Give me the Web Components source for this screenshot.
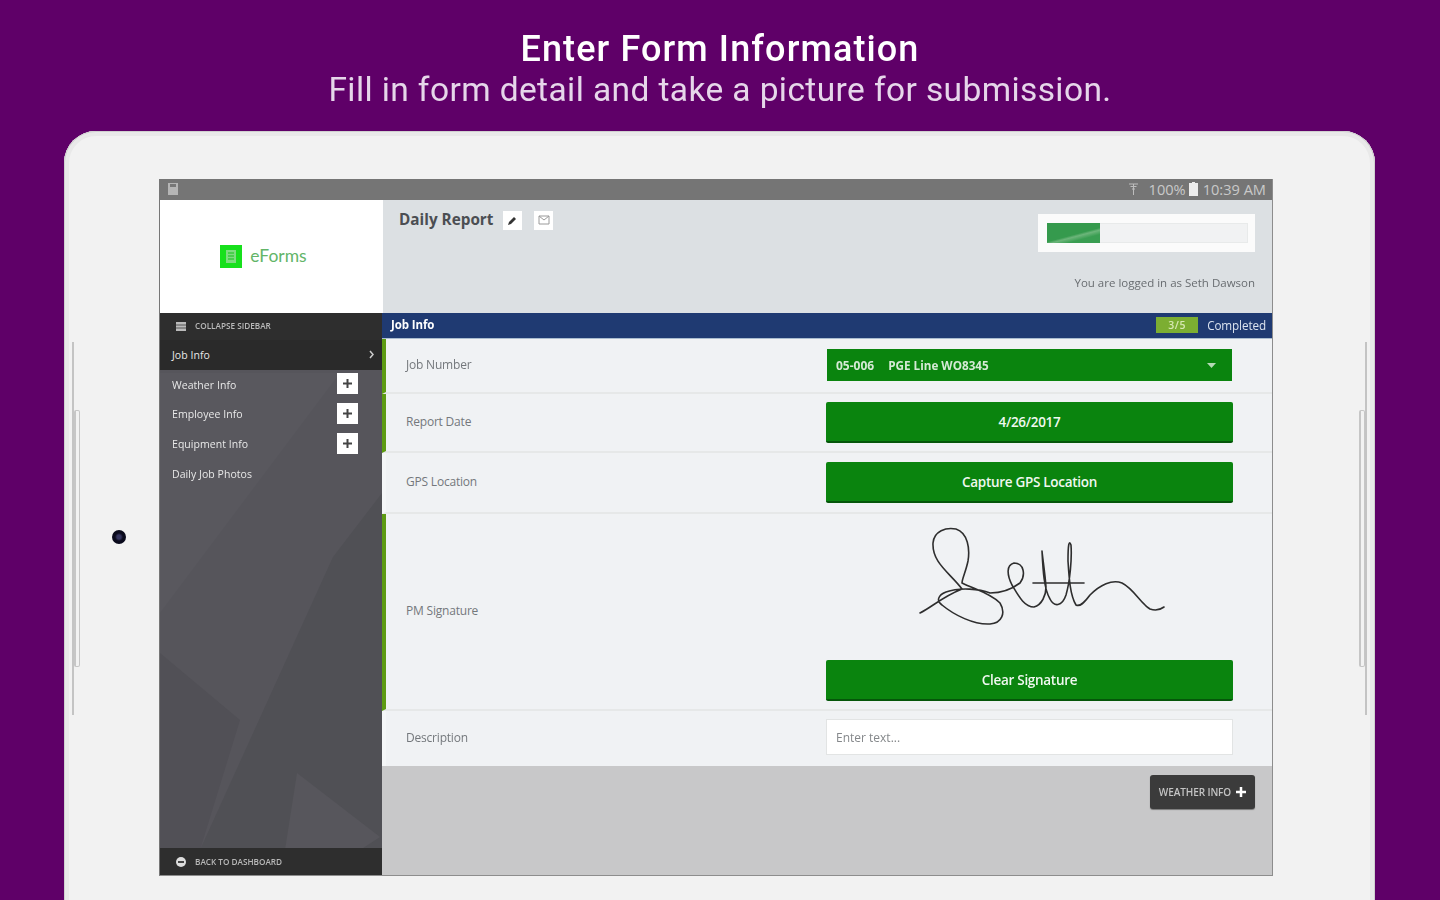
<!DOCTYPE html>
<html lang="en">
<head>
<meta charset="utf-8">
<title>Enter Form Information</title>
<style>
  html, body { margin: 0; height: 900px; overflow: hidden; background: #5f0068; }
</style>
</head>
<body>
<promo-slide>
  <span slot="title">Enter Form Information</span>
  <span slot="subtitle">Fill in form detail and take a picture for submission.</span>
  <tablet-frame>
    <status-bar></status-bar>
    <form-header></form-header>
    <div style="display:flex; height:563px">
      <side-nav>
        <nav-item active>Job Info</nav-item>
        <nav-item plus>Weather Info</nav-item>
        <nav-item plus>Employee Info</nav-item>
        <nav-item plus>Equipment Info</nav-item>
        <nav-item>Daily Job Photos</nav-item>
      </side-nav>
      <form-panel>
        <form-row label="Job Number" mark height="55">
          <select-box code="05-006" name="PGE Line WO8345"></select-box>
        </form-row>
        <form-row label="Report Date" mark height="59">
          <green-button>4/26/2017</green-button>
        </form-row>
        <form-row label="GPS Location" height="61">
          <green-button>Capture GPS Location</green-button>
        </form-row>
        <form-row label="PM Signature" mark height="197" stretch>
          <signature-pad></signature-pad>
          <green-button>Clear Signature</green-button>
        </form-row>
        <form-row label="Description" height="55" plain>
          <text-box>Enter text...</text-box>
        </form-row>
      </form-panel>
    </div>
  </tablet-frame>
</promo-slide>

<script>
// Outer promo slide: purple page with the caption above the tablet
class PromoSlide extends HTMLElement {
    connectedCallback() {
        this.attachShadow({ mode: 'open' }).innerHTML = `
            <style>
                :host { display: block; height: 900px; overflow: hidden; color: #fff; font-family: Roboto, "Liberation Sans", sans-serif; }
                .caption { height: 131px; padding-top: 28px; box-sizing: border-box; text-align: center; filter: blur(0.5px); }
                .title { font-size: 36px; line-height: 42px; font-weight: 500; letter-spacing: 1.1px; }
                .subtitle { font-size: 33.5px; line-height: 40px; color: #e6d6ea; letter-spacing: 0.4px; }
            </style>
            <div class="caption">
                <div class="title"><slot name="title"></slot></div>
                <div class="subtitle"><slot name="subtitle"></slot></div>
            </div>
            <slot></slot>
        `;
    }
}

// Tablet body with its camera and side buttons, the screen sits inside
class TabletFrame extends HTMLElement {
    connectedCallback() {
        this.attachShadow({ mode: 'open' }).innerHTML = `
            <style>
                :host { display: block; position: relative; margin: 0 65px 0 64px; height: 800px; box-sizing: border-box; padding: 48px 0 0 95px;
                        background: #f2f2f2; border-radius: 32px 32px 0 0; box-shadow: inset 0 0 0 1px #d0d0d0, inset 0 0 0 5px #e9e9e9; }
                .screen { width: 1114px; height: 697px; display: flex; flex-direction: column; box-sizing: border-box;
                          border: 1px solid #8d8d8d; border-top: 0; border-left: 1px solid #777; filter: blur(0.6px);
                          font-family: "Open Sans", "Liberation Sans", sans-serif; }
                .camera { position: absolute; left: 48px; top: 399px; width: 14px; height: 14px; border-radius: 50%; background: radial-gradient(circle, #34345e 0 2px, #0a0a1c 4px); }
                .line { position: absolute; top: 211px; height: 373px; width: 2px; background: #c4c4c4; }
                .key { position: absolute; top: 279px; height: 257px; width: 6px; border: 1px solid #c6c6c6; border-left-width: 2px; box-sizing: border-box; border-radius: 2px; }
            </style>
            <i class="line" style="left:8px"></i><i class="key" style="left:10px"></i>
            <i class="line" style="right:8px"></i><i class="key" style="right:10px"></i>
            <i class="camera"></i>
            <div class="screen"><slot></slot></div>
        `;
    }
}

class StatusBar extends HTMLElement {
    connectedCallback() {
        this.attachShadow({ mode: 'open' }).innerHTML = `
            <style>
                :host { display: flex; align-items: center; height: 21px; background: #757575; color: #c9c9c9; padding: 0 6px 0 8px; font-size: 14.6px; }
                .spacer { flex: 1; }
                svg { display: block; }
                .time { margin-left: 5px; }
                .level { margin-left: 10px; }
            </style>
            <svg width="10" height="12" viewBox="0 0 10 12"><path d="M0 0h10v12H0z" fill="#b5b5b5"/><path d="M2 1h6v3H2z" fill="#777"/></svg>
            <span class="spacer"></span>
            <svg width="11" height="13" viewBox="0 0 11 13" fill="none" stroke="#bdbdbd"><path d="M1 1h9M2.500 3.500h6M4 6h3M5.500 1v11"/></svg>
            <span class="level">100%</span>
            <svg width="9" height="14" viewBox="0 0 9 14" style="margin-left:3px"><path d="M3 0h3v1h3v13H0V1h3z" fill="#ededed"/></svg>
            <span class="time">10:39 AM</span>
        `;
    }
}

// White logo block, title with its two little buttons, and the progress card
class FormHeader extends HTMLElement {
    connectedCallback() {
        this.attachShadow({ mode: 'open' }).innerHTML = `
            <style>
                :host { display: flex; height: 113px; flex: none; background: #dce0e3; }
                .logo { width: 223px; background: #fff; display: flex; align-items: center; justify-content: center; gap: 8px; padding-right: 16px; box-sizing: border-box; }
                .logo span { font-size: 17.5px; color: #62b568; font-family: Lato, sans-serif; margin-bottom: 2px; }
                .info { flex: 1; padding: 11px 17px 0 16px; display: flex; justify-content: space-between; }
                .title { display: flex; align-items: flex-start; gap: 10px; font-size: 15.3px; font-weight: 700; color: #4b4e52; line-height: 19px; }
                .title > span:first-child { margin-top: -1px; }
                .tool { width: 19px; height: 19px; background: #fff; display: flex; align-items: center; justify-content: center; }
                .tool + .tool { margin-left: 2px; }
                .right { display: flex; flex-direction: column; align-items: flex-end; padding-top: 3px; }
                .card { width: 217px; height: 38px; background: #fbfbfb; padding: 9px; box-sizing: border-box; }
                .bar { height: 20px; width: 201px; background: #f1f2f3; box-shadow: inset 0 0 0 1px #e8eaea; }
                .fill { width: 53px; height: 100%; background: linear-gradient(165deg, #359a4d 55%, #6cb57a 62%, #3a9e52 75%); }
                .user { font-size: 11.5px; color: #686c70; margin-top: 23px; }
            </style>
            <div class="logo">
                <svg width="22" height="23" viewBox="0 0 22 23"><path d="M0 0h22v23H0z" fill="#17e01c"/><path d="M6 5h10v13H6z" fill="#7fdc80"/><path d="M8 8h6M8 11h6M8 14h6" stroke="#17c01c"/></svg>
                <span>eForms</span>
            </div>
            <div class="info">
                <div class="title">
                    <span>Daily Report</span>
                    <span class="tool"><svg width="11" height="11" viewBox="0 0 11 11"><path d="M1 10l1-3 5-5 2 2-5 5z" fill="#333"/></svg></span>
                    <span class="tool"><svg width="12" height="10" viewBox="0 0 12 10" fill="none" stroke="#9a9a9a"><path d="M1 1h10v8H1zM1 1l5 4 5-4"/></svg></span>
                </div>
                <div class="right">
                    <div class="card"><div class="bar"><div class="fill"></div></div></div>
                    <div class="user">You are logged in as Seth Dawson</div>
                </div>
            </div>
        `;
    }
}

// Dark left column with faint facets behind the menu
class SideNav extends HTMLElement {
    connectedCallback() {
        this.attachShadow({ mode: 'open' }).innerHTML = `
            <style>
                :host { display: flex; flex-direction: column; position: relative; width: 222px; flex: none; background: #56555b; color: #e8e8e8; overflow: hidden; }
                .facets { position: absolute; left: 0; top: 0; }
                .bar { position: relative; height: 27px; flex: none; background: #2e2e2e; display: flex; align-items: center; gap: 9px; padding-left: 16px; font-size: 8.2px; font-weight: 600; color: #b9b9b9; }
                .bar span { margin-top: -1px; }
                .bar.low span { margin-top: 0; }
                .list { position: relative; flex: 1; display: flex; flex-direction: column; }
                svg { display: block; }
            </style>
            <svg class="facets" width="222" height="563" viewBox="0 0 222 563">
                <path d="M0 60H180L0 300z" fill="#59585e"/>
                <path d="M173 244L222 180V537H40z" fill="#505055"/>
                <path d="M0 340L80 407 40 537H0z" fill="#515056"/>
                <path d="M137 460L220 524 200 537H125z" fill="#57565c"/>
            </svg>
            <div class="bar">
                <svg width="10" height="9" viewBox="0 0 10 9"><path d="M0 0h10v9H0z" fill="#bbb"/><path d="M0 3h10M0 6h10" stroke="#555"/></svg>
                <span>COLLAPSE SIDEBAR</span>
            </div>
            <div class="list"><slot></slot></div>
            <div class="bar low">
                <svg width="10" height="10" viewBox="0 0 10 10"><circle cx="5" cy="5" r="5" fill="#ddd"/><path d="M2 5h6" stroke="#444" stroke-width="2"/></svg>
                <span>BACK TO DASHBOARD</span>
            </div>
        `;
    }
}

class NavItem extends HTMLElement {
    connectedCallback() {
        const active = this.hasAttribute('active');
        const plus = this.hasAttribute('plus');
        this.attachShadow({ mode: 'open' }).innerHTML = `
            <style>
                :host { display: flex; align-items: center; justify-content: space-between; height: 29.6px; padding: 0 24px 0 12px; font-size: 10.5px; letter-spacing: 0.05px; }
                :host([active]) { background: #2a2a2a; padding-right: 8px; }
                .text { margin-top: 1px; }
                .plus { width: 21px; height: 21px; margin-top: -1px; background: #fff; display: flex; align-items: center; justify-content: center; }
                svg { display: block; }
            </style>
            <span class="text"><slot></slot></span>
            ${plus ? '<span class="plus"><svg width="9" height="9" viewBox="0 0 9 9"><path d="M4.500 0v9M0 4.500h9" stroke="#444" stroke-width="2"/></svg></span>' : ''}
            ${active ? '<svg width="5" height="9" viewBox="0 0 5 9" fill="none" stroke="#ccc" stroke-width="1.500"><path d="M1 1l3 3.500L1 8"/></svg>' : ''}
        `;
    }
}

// Right column: blue section bar, the rows, then the grey footer with next button
class FormPanel extends HTMLElement {
    connectedCallback() {
        this.attachShadow({ mode: 'open' }).innerHTML = `
            <style>
                :host { display: flex; flex-direction: column; flex: 1; min-width: 0; background: #c8c8c9; }
                .head { height: 26px; flex: none; box-sizing: border-box; background: #1f3a72; border-bottom: 1px solid #a9bcd0; display: flex; align-items: center; padding: 0 6px 1px 9px; color: #fff; font-size: 11.5px; font-weight: 700; letter-spacing: -0.1px; }
                .spacer { flex: 1; }
                .count { width: 42px; height: 16px; line-height: 16px; text-align: center; background: #7cae32; color: #d8e8b4; font-weight: 600; font-size: 10.5px; margin-right: 9px; letter-spacing: 0.6px; }
                .done { font-weight: 400; color: #dbe3ef; font-size: 11.7px; }
                .foot { flex: 1; display: flex; justify-content: flex-end; align-items: flex-start; padding: 9px 17px 0 0; }
                .next { width: 105px; height: 34px; box-sizing: border-box; background: #3b3b3b; color: #c4c4c4; border-radius: 3px; display: flex; align-items: center; justify-content: center; gap: 5px; font-size: 10px; font-weight: 600; letter-spacing: -0.1px; box-shadow: 0 1px 1px #777; }
                svg { display: block; }
            </style>
            <div class="head">
                <span>Job Info</span><span class="spacer"></span>
                <span class="count">3/5</span><span class="done">Completed</span>
            </div>
            <slot></slot>
            <div class="foot">
                <div class="next">WEATHER INFO <svg width="10" height="10" viewBox="0 0 10 10"><path d="M5 0v10M0 5h10" stroke="#fff" stroke-width="2.500"/></svg></div>
            </div>
        `;
    }
}

// One label + control line; "mark" gives the green left edge
class FormRow extends HTMLElement {
    connectedCallback() {
        const height = this.getAttribute('height');
        const stretch = this.hasAttribute('stretch');
        this.attachShadow({ mode: 'open' }).innerHTML = `
            <style>
                :host { display: flex; align-items: center; justify-content: space-between; flex: none; box-sizing: border-box; height: ${height}px;
                        background: #f0f2f4; border-bottom: 2px solid #e6e8e8; border-left: 4px solid #f4f6f7; padding: 0 39px 0 20px; }
                :host([mark]) { border-left-color: #5d9b12; }
                :host([plain]) { border-bottom: 0; padding-bottom: 2px; }
                .label { font-size: 12px; color: #74787c; letter-spacing: -0.2px; margin-bottom: 2px; }
                :host([plain]) .label { margin-bottom: 0; }
                .control { width: 407px; display: flex; flex-direction: column; ${stretch ? 'padding-bottom: 8px; justify-content: flex-end; height: 100%; box-sizing: border-box;' : ''} }
            </style>
            <span class="label">${this.getAttribute('label')}</span>
            <div class="control"><slot></slot></div>
        `;
    }
}

class SelectBox extends HTMLElement {
    connectedCallback() {
        this.attachShadow({ mode: 'open' }).innerHTML = `
            <style>
                :host { display: flex; align-items: center; height: 32px; margin: 0 1px; background: #0a840e; color: #d5ead5; padding: 0 16px 0 9px; font-size: 12px; font-weight: 700; }
                .name { flex: 1; margin-left: 14px; font-size: 11.7px; }
            </style>
            <span>${this.getAttribute('code')}</span>
            <span class="name">${this.getAttribute('name')}</span>
            <svg width="9" height="5" viewBox="0 0 9 5"><path d="M0 0h9L4.500 5z" fill="#b6dab6"/></svg>
        `;
    }
}

class GreenButton extends HTMLElement {
    connectedCallback() {
        this.attachShadow({ mode: 'open' }).innerHTML = `
            <style>
                :host { display: flex; flex: none; align-items: center; justify-content: center; height: 41px; padding-top: 1px; box-sizing: border-box; background: #0a840e; border-bottom: 2px solid #05560a; border-radius: 2px; color: #f0f8f0; font-size: 13.5px; font-weight: 600; letter-spacing: -0.3px; }
            </style>
            <slot></slot>
        `;
    }
}

class TextBox extends HTMLElement {
    connectedCallback() {
        this.attachShadow({ mode: 'open' }).innerHTML = `
            <style>
                :host { display: flex; align-items: center; height: 36px; box-sizing: border-box; background: #fff; border: 1px solid #e2e4e4; padding-left: 9px; font-size: 12px; color: #85888b; }
            </style>
            <slot></slot>
        `;
    }
}

// Hand drawn signature traced from the capture
class SignaturePad extends HTMLElement {
    connectedCallback() {
        this.attachShadow({ mode: 'open' }).innerHTML = `
            <style>
                :host { display: block; flex: none; height: 125px; margin-bottom: 19px; margin-left: 64px; }
                svg { display: block; margin-top: -5px; }
            </style>
            <svg width="300" height="130" viewBox="0 0 300 130" fill="none" stroke="#2e2e2e" stroke-width="1.600" stroke-linecap="round" stroke-linejoin="round">
                <path d="M30 102C42 96 52 86 72 78C60 62 42 52 43 32C44 20 56 16 66 18C78 22 80 38 78 50C76 60 72 68 72 72C84 78 100 82 110 92C116 102 112 112 100 113C84 114 64 104 52 94C46 90 48 84 56 81C70 76 90 78 100 82C112 82 122 78 130 72C136 64 134 52 124 52C116 54 117 64 122 74C128 84 134 96 144 96C152 94 156 84 156 76C155 62 153 50 152 40C153 60 154 78 160 88C164 96 172 96 176 84C180 70 182 48 181 34C179 28 178 34 178 50C179 66 180 84 186 94C190 96 194 92 200 84C210 74 222 68 232 72C244 78 250 92 260 98C266 100 270 99 274 96"/>
                <path d="M143 72H194"/>
            </svg>
        `;
    }
}

customElements.define('promo-slide', PromoSlide);
customElements.define('tablet-frame', TabletFrame);
customElements.define('status-bar', StatusBar);
customElements.define('form-header', FormHeader);
customElements.define('side-nav', SideNav);
customElements.define('nav-item', NavItem);
customElements.define('form-panel', FormPanel);
customElements.define('form-row', FormRow);
customElements.define('select-box', SelectBox);
customElements.define('green-button', GreenButton);
customElements.define('text-box', TextBox);
customElements.define('signature-pad', SignaturePad);
</script>
</body>
</html>
